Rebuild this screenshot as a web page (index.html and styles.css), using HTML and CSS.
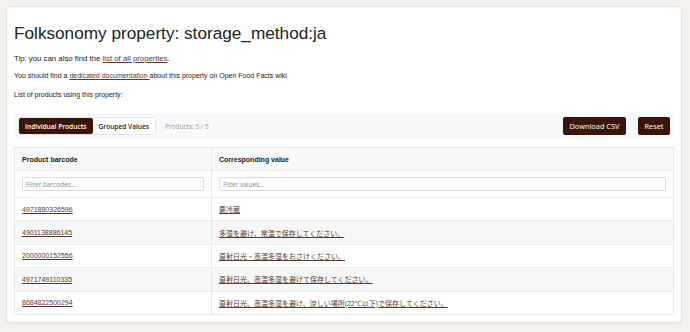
FILE: index.html
```html
<!DOCTYPE html>
<html>
<head>
  <title>Folksonomy property: storage_method:ja</title>
  <meta charset="UTF-8">
  <meta name="viewport" content="width=device-width, initial-scale=1.0">
  <link rel="stylesheet" href="styles.css">
</head>
<body>
  <div class="card">
    <h1>Folksonomy property: storage_method:ja</h1>
    <p class="tip">Tip: you can also find the <a href="#">list of all properties</a>.</p>
    <p class="note">You should find a <a href="#">dedicated documentation </a>about this property on Open Food Facts wiki</p>
    <p class="note">List of products using this property:</p>

    <div class="toolbar">
      <div class="toggle">
        <button type="button" class="active">Individual Products</button>
        <button type="button">Grouped Values</button>
      </div>
      <span class="count">Products: 5 / 5</span>
      <div class="actions">
        <button type="button" class="btn">Download CSV</button>
        <button type="button" class="btn">Reset</button>
      </div>
    </div>

    <table class="products">
      <thead>
        <tr>
          <th class="col-code">Product barcode</th>
          <th>Corresponding value</th>
        </tr>
        <tr class="filters">
          <td><input type="text" placeholder="Filter barcodes..."></td>
          <td><input type="text" placeholder="Filter values..."></td>
        </tr>
      </thead>
      <tbody>
        <tr><td><a href="#">4971880326596</a></td><td><a href="#">要冷蔵</a></td></tr>
        <tr><td><a href="#">4901138886145</a></td><td><a href="#">多湿を避け、常温で保存してください。</a></td></tr>
        <tr><td><a href="#">2000000152556</a></td><td><a href="#">直射日光・高温多湿をおさけください。</a></td></tr>
        <tr><td><a href="#">4971749110335</a></td><td><a href="#">直射日光、高温多湿を避けて保存してください。</a></td></tr>
        <tr><td><a href="#">8684822500294</a></td><td><a href="#">直射日光、高温多湿を避け、涼しい場所(22℃以下)で保存してください。</a></td></tr>
      </tbody>
    </table>
  </div>
</body>
</html>
```

FILE: styles.css
```css
/* Reset styles */
* {
  margin: 0;
  padding: 0;
  box-sizing: border-box;
}

/* Base styles */
body {
  font-family: 'Liberation Sans', Arial, 'Noto Sans CJK JP', sans-serif;
  background-color: #f4f1ee;
  color: #222;
  padding: 6px 8px 8px 6px;
}

a {
  color: #5b3a2b;
  text-decoration: underline;
}

/* Layout styles */
.card {
  background-color: #fff;
  border: 1px solid #e7e3df;
  border-radius: 5px;
  box-shadow: 0 1px 3px rgba(0, 0, 0, 0.06);
  padding: 15px 7px 7px 7px;
}

h1 {
  font-size: 17.2px;
  font-weight: 400;
  line-height: 22px;
  margin-bottom: 10px;
}

.tip {
  font-size: 7.8px;
  margin-bottom: 9px;
}

.note {
  font-size: 7px;
  margin-bottom: 12px;
}

.toolbar {
  display: flex;
  align-items: center;
  background-color: #f7f8fa;
  border-radius: 3px;
  padding: 3px 4px 4px 4px;
  margin-top: 16px;
  margin-bottom: 8px;
}

.toggle {
  display: flex;
  border: 1px solid #e3e5e8;
  border-radius: 3px;
  background-color: #fff;
}

.toggle button,
.btn {
  font-family: 'Open Sans', sans-serif;
  font-size: 7.4px;
  border: none;
  cursor: pointer;
}

.toggle button {
  background-color: #fff;
  color: #222;
  height: 16px;
  padding: 0 6px;
  font-size: 6.6px;
  font-weight: 600;
}

.toggle button.active {
  background-color: #3a160a;
  color: #fff;
  border-radius: 2px;
}

.count {
  font-family: 'Open Sans', sans-serif;
  font-size: 6.5px;
  color: #999;
  margin-left: 9px;
}

.actions {
  display: flex;
  gap: 12px;
  margin-left: auto;
}

.btn {
  background-color: #3a160a;
  color: #fff;
  height: 18px;
  padding: 0 6.5px;
  border-radius: 2px;
}

/* Table */
.products {
  width: 100%;
  border-collapse: collapse;
  border: 1px solid #e7e8ea;
  font-size: 7px;
}

.products th {
  text-align: left;
  font-weight: 700;
  background-color: #f7f8fa;
  height: 23px;
  padding: 0 7px;
  border-right: 1px solid #e7e8ea;
}

.products td {
  height: 23.4px;
  padding: 0 7px;
  border-top: 1px solid #ececec;
  border-right: 1px solid #e7e8ea;
}

.products .col-code {
  width: 197px;
}

.filters td {
  height: 27px;
}

.filters input {
  width: 100%;
  height: 14px;
  font-family: 'Open Sans', sans-serif;
  font-size: 6.5px;
  padding: 0 3px;
  border: 1px solid #dcdcdc;
  border-radius: 2px;
}

.filters input::placeholder {
  color: #888;
}

.products tbody tr:nth-child(even) td {
  background-color: #f7f7f7;
}
```
